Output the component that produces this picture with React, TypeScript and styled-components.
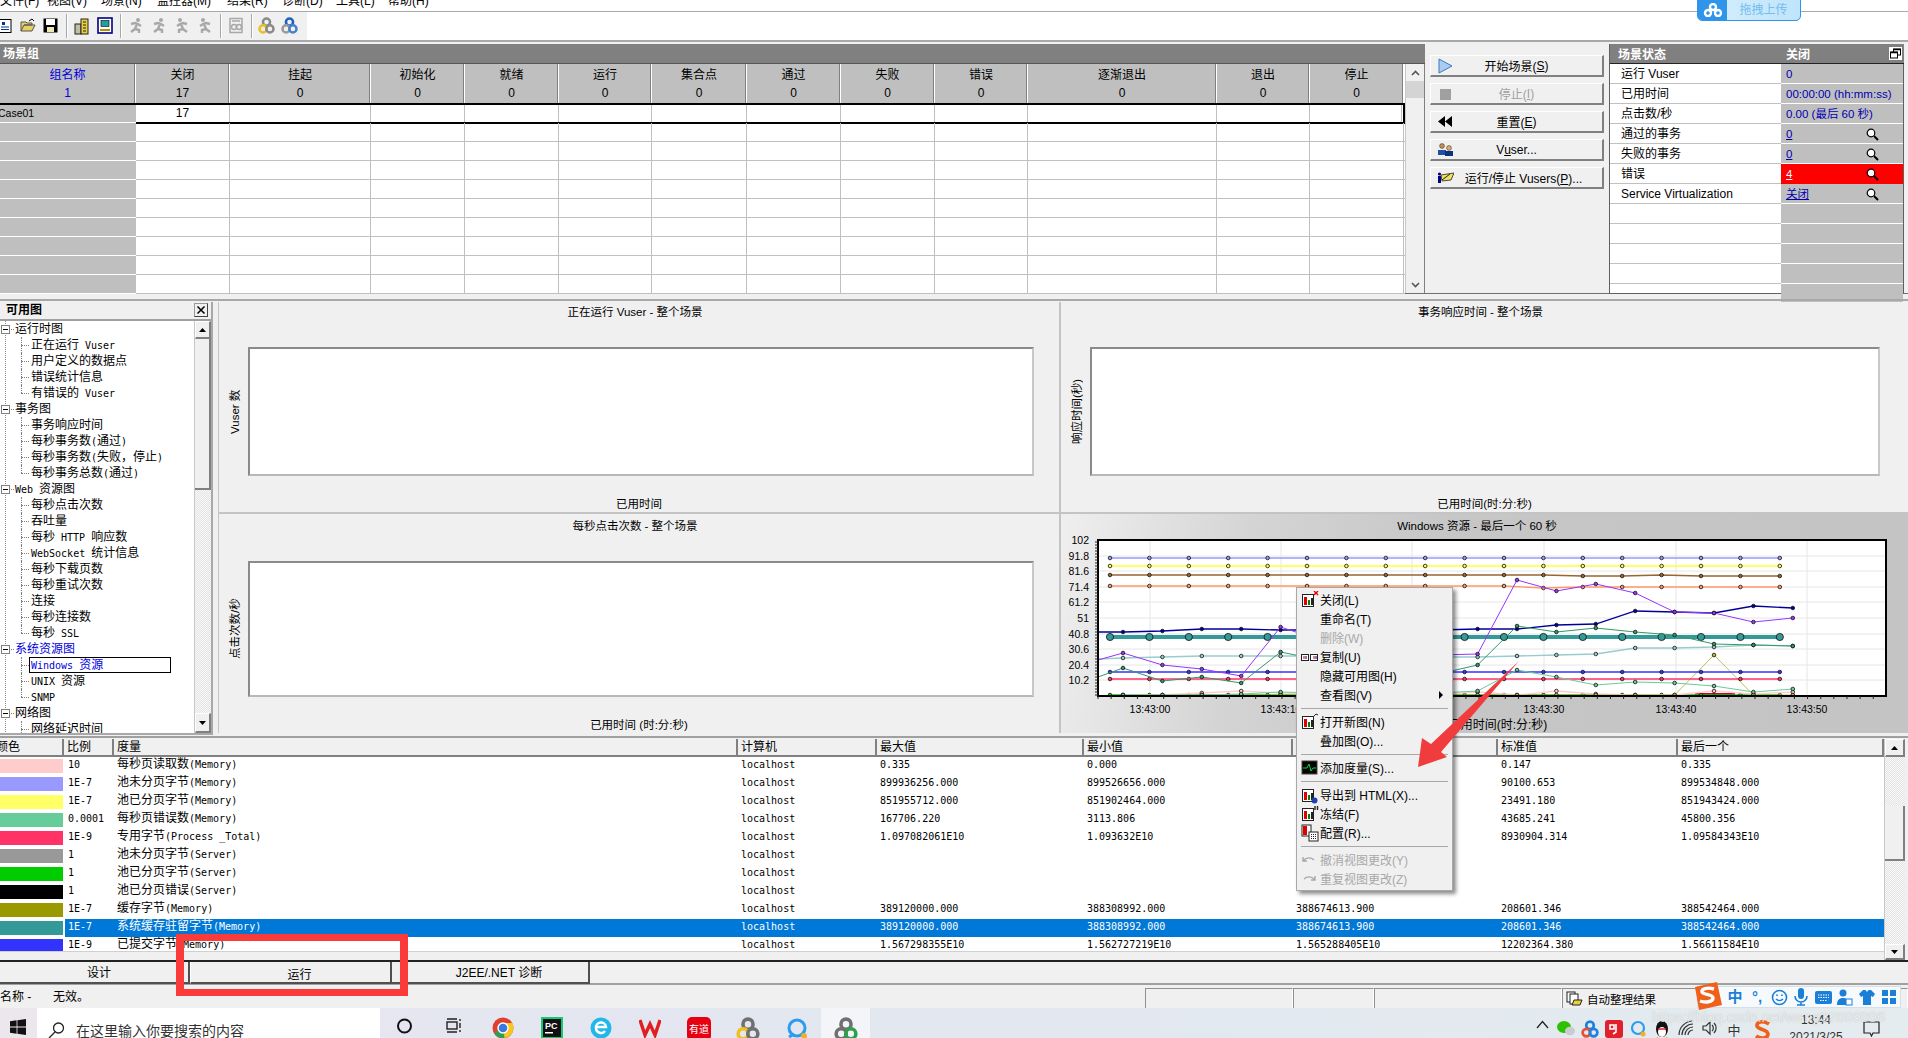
import React from "react";
import styled, { createGlobalStyle } from "styled-components";

const Global = createGlobalStyle`
  html, body { margin: 0; padding: 0; background: #f0f0f0; }
  * { box-sizing: border-box; }
  body { font-family: "Liberation Sans", "Noto Sans CJK SC", sans-serif; font-size: 12px; color: #000; }
`;

const Page = styled.div`
  position: relative; width: 1908px; height: 1038px; overflow: hidden; background: #f0f0f0;
  display: flex; flex-direction: column;
`;
const MenuBar = styled.div`
  height: 12px; background: #fff; border-bottom: 1px solid #a8a8a8; display: flex; overflow: hidden; flex: none;
`;
const MenuLabel = styled.span<{ $w: number }>`
  width: ${p => p.$w}px; flex: none; font-size: 12px; line-height: 12px; margin-top: -5px; white-space: nowrap;
`;
const ToolRow = styled.div`
  height: 30px; background: #fff; border-bottom: 2px solid #a8a8a8; flex: none; display: flex;
`;
const Toolbar = styled.div`
  width: 307px; background: #f0f0f0; display: flex; align-items: center; margin-left: 0; overflow: hidden; padding-bottom: 1px;
`;
const ToolCell = styled.div<{ $first?: boolean }>`
  width: 23px; flex: none; display: flex; justify-content: center; align-items: center;
  margin-left: ${p => (p.$first ? -7 : 0)}px;
`;
const ToolSep = styled.div`
  width: 8px; height: 24px; flex: none; position: relative;
  &::after { content: ""; display: block; width: 1px; height: 24px; margin-left: 4px; background: #a8a8a8; box-shadow: 1px 0 #fff; }
`;

const ScenarioRow = styled.div`
  height: 250px; margin-top: 2px; flex: none; display: flex; border-bottom: 1px solid #707070;
`;
const GroupWrap = styled.div`
  width: 1425px; flex: none; display: flex; flex-direction: column; position: relative;
`;
const SectionBar = styled.div`
  height: 20px; background: #808080; color: #fff; font-weight: 700; font-size: 12px; line-height: 21px; padding-left: 3px; flex: none; border-bottom: 1px solid #555;
`;
const GroupBody = styled.div`display: flex; flex: 1; min-height: 0;`;
const GroupGrid = styled.div`width: 1405px; flex: none; display: flex; flex-direction: column; background: #fff;`;
const GroupHead = styled.div`display: flex; height: 39px; flex: none;`;
const HeadCell = styled.div<{ $w: number; $blue?: boolean }>`
  width: ${p => p.$w}px; flex: none; background: #bfbfbf; border-right: 1px solid #fff; box-shadow: inset -1px 0 #808080;
  color: ${p => (p.$blue ? "#0000e0" : "#000")}; display: flex; flex-direction: column; align-items: center; line-height: 18px; padding-top: 2px; font-size: 12px;
`;
const GroupLine = styled.div<{ $first?: boolean }>`
  display: flex; height: 19px; flex: none;
  ${p => p.$first
    ? "border-top: 2px solid #000; border-bottom: 2px solid #000; height: 21px; margin-bottom: -1px; border-right: 2px solid #000;"
    : "border-bottom: 1px solid #c0c0c0;"}
`;
const NameCell = styled.div`
  width: 136px; flex: none; background: #bfbfbf; border-bottom: 1px solid #fff; margin-bottom: -1px; overflow: hidden; font-size: 10.5px; line-height: 17px; white-space: nowrap;
`;
const CaseName = styled.span`margin-left: -2px; display: inline-block;`;
const DataCell = styled.div<{ $w: number }>`
  width: ${p => p.$w}px; flex: none; border-right: 1px solid #c0c0c0; text-align: center; line-height: 17px; font-size: 12px; padding-right: 0;
`;
const VScroll = styled.div<{ $w: number }>`
  width: ${p => p.$w}px; flex: none; display: flex; flex-direction: column; border-left: 1px solid #c8c8c8;
  background: repeating-conic-gradient(#e4e4e4 0 25%, #f8f8f8 0 50%) 0 0 / 2px 2px;
`;
const PlainScroll = styled(VScroll)`background: #f0f0f0; border-right: 1px solid #808080;`;
const ScrollBtn = styled.div<{ $h: number }>`
  height: ${p => p.$h}px; flex: none; background: #f0f0f0; display: flex; align-items: center; justify-content: center;
`;
const RaisedBtn = styled(ScrollBtn)`
  border-right: 2px solid #808080; border-bottom: 2px solid #808080; border-top: 1px solid #fff; border-left: 1px solid #fff;
`;
const Thumb = styled.div<{ $h: number; $raised?: boolean }>`
  height: ${p => p.$h}px; flex: none; background: ${p => (p.$raised ? "#f0f0f0" : "#d4d4d4")};
  ${p => p.$raised && "border-right: 2px solid #808080; border-bottom: 2px solid #808080;"}
`;
const Grow = styled.div`flex: 1;`;

const BtnColumn = styled.div`
  width: 184px; flex: none; padding: 11px 0 0 5px; display: flex; flex-direction: column; gap: 6px;
`;
const CmdBtn = styled.div<{ $off?: boolean }>`
  width: 174px; height: 22px; position: relative; display: flex; align-items: center; justify-content: center;
  border-top: 1px solid #fff; border-left: 1px solid #fff; border-right: 2px solid #808080; border-bottom: 2px solid #808080;
  background: #f0f0f0; font-size: 12px; color: ${p => (p.$off ? "#a0a0a0" : "#000")};
`;
const BtnIcon = styled.span`
  position: absolute; left: 6px; top: 2px; display: flex;
`;

const StatePanel = styled.div`
  width: 295px; flex: none; display: flex; flex-direction: column; border: 1px solid #606060; border-top: none; background: #fff; align-self: stretch; height: 250px;
`;
const StateHead = styled.div`
  height: 20px; background: #808080; color: #fff; font-weight: 700; display: flex; align-items: center; border-bottom: 1px solid #222; flex: none; position: relative; margin-right: -1px;
`;
const StateHeadA = styled.span`width: 176px; padding-left: 8px;`;
const RestoreBox = styled.span`
  position: absolute; right: 2px; top: 3px; width: 13px; height: 13px; background: #fff; display: flex; align-items: center; justify-content: center;
`;
const StateRow = styled.div`
  height: 20px; display: flex; flex: none; overflow: hidden;
`;
const StateLabel = styled.div`
  width: 171px; flex: none; padding: 2px 0 0 11px; font-size: 12px; line-height: 16px; border-bottom: 1px solid #c0c0c0; white-space: nowrap;
`;
const StateValue = styled.div<{ $red?: boolean }>`
  flex: 1; background: ${p => (p.$red ? "#ff0000" : "#bfbfbf")}; border-bottom: 1px solid ${p => (p.$red ? "#ff0000" : "#fff")}; color: ${p => (p.$red ? "#fff" : "#0000b0")};
  padding: 2px 0 0 5px; line-height: 16px; font-size: 11.5px; display: flex; justify-content: space-between; white-space: nowrap;
`;
const ValLink = styled.span`text-decoration: underline;`;
const LensSlot = styled.span`margin-right: 24px; display: flex; align-items: center;`;

const GraphsRow = styled.div`
  height: 438px; margin-top: 5px; flex: none; display: flex; border-top: 2px solid #a8a8a8; padding-top: 1px; overflow: hidden;
`;
const AvailPanel = styled.div`
  width: 213px; flex: none; height: 433px; display: flex; flex-direction: column; border-right: 2px solid #a8a8a8; border-bottom: 2px solid #a8a8a8;
`;
const AvailHead = styled.div`
  height: 17px; flex: none; font-weight: 700; font-size: 12px; padding-left: 6px; line-height: 16px; position: relative;
`;
const CloseX = styled.span`
  position: absolute; right: 3px; top: 1px; width: 14px; height: 14px; border: 1px solid #999; border-right-color: #444; border-bottom-color: #444; display: flex; align-items: center; justify-content: center;
`;
const TreeFrame = styled.div`
  flex: 1; min-height: 0; display: flex; border-top: 2px solid #a0a0a0; background: #fff;
`;
const TreeBody = styled.div`
  flex: 1; overflow: hidden; height: 412px; font-size: 12px;
  background: linear-gradient(#909090 50%, transparent 50%) 5px 0 / 1px 2px repeat-y;
`;
const TreeNode = styled.div<{ $kid?: boolean; $last?: boolean; $blue?: boolean }>`
  height: 16px; line-height: 16px; position: relative; white-space: nowrap;
  padding-left: ${p => (p.$kid ? 31 : 15)}px; color: ${p => (p.$blue ? "#0000e0" : "#000")};
  ${p => p.$kid && `
    &::after { content: ""; position: absolute; left: 21px; top: 0; height: ${p.$last ? 8 : 16}px; border-left: 1px dotted #808080; }
    &::before { content: ""; position: absolute; left: 21px; top: 8px; width: 8px; border-top: 1px dotted #808080; }
  `}
  ${p => !p.$kid && `
    &::before { content: ""; position: absolute; left: 9px; top: 8px; width: 5px; border-top: 1px dotted #808080; }
  `}
`;
const Expander = styled.span`
  position: absolute; left: 1px; top: 4px; width: 9px; height: 9px; border: 1px solid #808080; background: #fff;
  &::after { content: ""; position: absolute; left: 1px; top: 3px; width: 5px; height: 1px; background: #000; }
`;
const Picked = styled.span`
  display: inline-block; margin-left: -2px; width: 142px; height: 16px; border: 1px solid #000; line-height: 14px; padding-left: 1px; color: #0000e0;
`;
const GraphGrid = styled.div`
  margin-left: 5px; flex: 1; display: grid; grid-template-columns: 840px 847px; grid-template-rows: 210px 219px; gap: 2px; height: 431px; background: #c4c4c4; border-left: 1px solid #c4c4c4;
`;
const GraphCell = styled.div`
  background: #f0f0f0; display: flex; flex-direction: column; min-width: 0;
`;
const ChartCell = styled.div`
  background: linear-gradient(100deg, #efefef 0%, #d4d4d4 22%, #c6c6c6 45%, #c4c4c4 100%);
`;
const GraphTitle = styled.div<{ $top: number }>`
  height: ${p => p.$top}px; padding-top: ${p => p.$top - 20}px; line-height: 20px; text-align: center; font-size: 11.5px; flex: none; padding-right: 8px;
`;
const PlotRow = styled.div<{ $right: number }>`
  flex: 1; min-height: 0; display: flex; padding-right: ${p => p.$right}px; margin-top: 25px;
`;
const YTitle = styled.div`
  width: 29px; flex: none; display: flex; align-items: center; justify-content: center; font-size: 11.5px; writing-mode: vertical-rl; text-orientation: sideways; transform: rotate(180deg);
`;
const Plot = styled.div`
  flex: 1; background: #fff; border: 2px solid; border-color: #8a8a8a #c8c8c8 #b8b8b8 #8a8a8a;
`;
const XTitle = styled.div`
  height: 16px; margin: 20px 0 0; flex: none; line-height: 16px; text-align: center; font-size: 11.5px; padding-right: 0;
`;

const MeasureWrap = styled.div`
  height: 224px; flex: none; border-top: 2px solid #a0a0a0; margin-top: -1px; padding-top: 1px; display: flex;
`;
const MeasureMain = styled.div`width: 1884px; flex: none; display: flex; flex-direction: column;`;
const MeasureHead = styled.div`
  height: 18px; flex: none; display: flex; border-bottom: 2px solid #808080; margin-bottom: 0;
`;
const HeadTh = styled.div<{ $w: number }>`
  width: ${p => p.$w}px; flex: none; padding-left: 3px; border-right: 2px solid #808080; font-size: 12px; line-height: 16px; white-space: nowrap;
`;
const MeasureList = styled.div`background: #fff; height: 195px; flex: none; overflow: hidden; border-bottom: 1px solid #d0d0d0;`;
const MRow = styled.div<{ $sel?: boolean }>`
  height: 18px; display: flex; align-items: stretch; color: ${p => (p.$sel ? "#fff" : "#000")};
  font-size: 12px;
`;
const Swatch = styled.div<{ $c: string }>`
  width: 63px; height: 14px; margin: 2px 2px 2px 0; flex: none; background: ${p => p.$c};
`;
const MCell = styled.div<{ $w: number; $sel?: boolean }>`
  width: ${p => p.$w}px; flex: none; padding-left: 3px; line-height: 14px; white-space: nowrap; overflow: hidden;
  background: ${p => (p.$sel ? "#0078d7" : "transparent")};
`;
const Latin = styled.span`font-family: "DejaVu Sans Mono", "Liberation Mono", monospace; font-size: 10px;`;

const TabsBar = styled.div`
  height: 25px; flex: none; border-top: 2px solid #222; border-bottom: 2px solid #a0a0a0; display: flex; margin-top: 0;
`;
const Tab = styled.div<{ $w: number; $pad: number; $active?: boolean }>`
  width: ${p => p.$w}px; flex: none; text-align: center; font-size: 12px; line-height: ${p => (p.$active ? 26 : 23)}px; height: 22px; padding-left: ${p => p.$pad}px;
  border-right: 2px solid #505050; border-bottom: 2px solid #505050;
  ${p => p.$active && "border-left: 1px solid #fff;"}
`;
const StatusBar = styled.div`
  height: 23px; flex: none; display: flex; align-items: flex-end;
`;
const StatusText = styled.div`
  width: 1145px; flex: none; height: 23px; line-height: 24px; font-size: 12px; display: flex; overflow: hidden;
`;
const StatusName = styled.span`width: 53px; flex: none;`;
const StatusPane = styled.div<{ $w: number }>`
  width: ${p => p.$w}px; height: 20px; flex: none; border-left: 1px solid #909090; border-top: 1px solid #909090; border-right: 1px solid #fff; display: flex; align-items: center; gap: 4px; padding-left: 3px; font-size: 11.5px;
`;

const Taskbar = styled.div`
  height: 30px; flex: none; display: flex; align-items: flex-start; background: linear-gradient(90deg, #ebe7ec 0, #e4e6f0 25%, #e2e7f0 50%, #e4ecef 100%);
`;
const StartCell = styled.div`width: 37px; height: 30px; flex: none; display: flex; align-items: center; justify-content: center; padding: 8px 2px 0 0;`;
const SearchBox = styled.div`
  width: 343px; height: 30px; flex: none; background: #fff; display: flex; align-items: center; gap: 11px; padding: 14px 0 0 11px; font-size: 14px; color: #333; white-space: nowrap;
`;
const TaskCell = styled.div<{ $on?: boolean }>`
  width: 49px; height: 30px; flex: none; display: flex; justify-content: center; padding-top: 9px; background: ${p => (p.$on ? "#f3f5f8" : "transparent")};
`;
const Tray = styled.div`
  margin-left: auto; display: flex; align-items: flex-start; height: 30px; padding-right: 20px;
`;
const TrayCell = styled.div`width: 24px; height: 30px; flex: none; display: flex; justify-content: center; padding-top: 12px; font-size: 13px; color: #333;`;
const TrayLogo = styled(TrayCell)`width: 32px;`;
const Clock = styled.div`
  width: 76px; flex: none; text-align: center; color: #333; font-size: 12px; line-height: 17px; padding-top: 4px; white-space: nowrap;
`;
const NotifyCell = styled.div`width: 34px; flex: none; display: flex; justify-content: center; padding-top: 13px;`;

const ContextMenu = styled.div`
  position: absolute; left: 1296px; top: 587px; width: 157px; height: 304px; background: #f0f0f0; border: 1px solid #a8a8a8; padding: 2px 0 0; box-shadow: 3px 3px 4px rgba(0,0,0,.45); z-index: 3;
`;
const MenuRow = styled.div<{ $off?: boolean }>`
  height: 19px; display: flex; align-items: center; position: relative; padding-left: 23px; font-size: 12px; color: ${p => (p.$off ? "#a8a8a8" : "#000")}; white-space: nowrap;
`;
const MenuIcon = styled.span`position: absolute; left: 4px; top: 1px; display: flex;`;
const MenuCaret = styled.span`position: absolute; right: 9px; top: 6px; width: 0; height: 0; border-left: 4px solid #000; border-top: 4px solid transparent; border-bottom: 4px solid transparent;`;
const MenuSep = styled.div`height: 8px; display: flex; align-items: center; padding: 0 4px; &::after { content: ""; flex: 1; height: 1px; background: #a8a8a8; }`;

const RedFrame = styled.div`
  position: absolute; left: 176px; top: 934px; width: 232px; height: 62px; border: 7px solid #fb3a3a; border-width: 7px 8px; z-index: 4;
`;
const ArrowLayer = styled.svg`position: absolute; left: 0; top: 0; z-index: 5; pointer-events: none;`;
const UploadTab = styled.div`
  position: absolute; left: 1697px; top: -1px; width: 104px; height: 22px; border: 1px solid #2f95ea; border-radius: 0 0 5px 5px; display: flex; overflow: hidden; z-index: 4; background: linear-gradient(90deg, #d7effc, #bfe4fa);
`;
const UploadIcon = styled.div`width: 29px; background: #2f95ea; display: flex; align-items: center; justify-content: center;`;
const UploadText = styled.div`flex: 1; text-align: center; color: #72bdef; font-size: 12px; line-height: 21px;`;
const Watermark = styled.div`
  position: absolute; left: 1652px; top: 1009px; font-size: 14.5px; color: rgba(255,255,255,.72); text-shadow: 0 0 1px rgba(120,120,120,.5); z-index: 6; white-space: nowrap;
`;
const SogouBar = styled.div`
  position: absolute; left: 1697px; top: 986px; width: 204px; height: 22px; background: #f6fafd; border: 1px solid #d4dfe8; display: flex; align-items: center; padding-left: 26px; z-index: 6;
`;
const SogouCell = styled.span`width: 22px; flex: none; display: flex; justify-content: center; color: #1b7fd8; font-size: 15px; font-weight: 700; line-height: 20px;`;
const SogouLogo = styled.svg`position: absolute; left: 1693px; top: 982px; z-index: 7;`;

const sim = (t: string) =>
  t.split(/([\x00-\x7f]+)/).filter(Boolean).map((s, i) =>
    /^[\x00-\x7f]+$/.test(s) ? <Latin key={i}>{s}</Latin> : <React.Fragment key={i}>{s}</React.Fragment>
  );

const Rings = ({ a = "#e8c020", b = "#8a8a8a", c = "#8a8a8a", s = 17 }: { a?: string; b?: string; c?: string; s?: number }) => (
  <svg width={s} height={s} viewBox="0 0 20 20" fill="none" strokeWidth="3">
    <circle cx="10" cy="6" r="4.2" stroke={c} />
    <circle cx="6" cy="14" r="4.2" stroke={a} />
    <circle cx="14" cy="14" r="4.2" stroke={b} />
  </svg>
);
const Runner = ({ flip }: { flip?: boolean }) => (
  <svg width="16" height="17" viewBox="0 0 16 17" fill="none" stroke="#a8a8a8" strokeWidth="2.4" style={flip ? { transform: "scaleX(-1)" } : undefined}>
    <circle cx="10" cy="3" r="2" fill="#a8a8a8" stroke="none" />
    <path d="M3 7l4-1 3 1 3 2M9 7l-2 5-4 3M7 12l4 1 0 3" />
  </svg>
);
const ChartIcon = ({ mark }: { mark?: React.ReactNode }) => (
  <svg width="18" height="18" viewBox="0 0 18 18">
    <rect x="1.5" y="3.5" width="11" height="12" fill="#fff" stroke="#222" />
    <rect x="3" y="6" width="3" height="8" fill="#e00000" />
    <rect x="7" y="9" width="2" height="5" fill="#008000" />
    <rect x="10" y="7" width="2" height="7" fill="#222" />
    {mark}
  </svg>
);
const Lens = () => (
  <svg width="13" height="13" viewBox="0 0 13 13" fill="none">
    <circle cx="5" cy="5" r="3.8" fill="#fff" stroke="#000" strokeWidth="1.2" />
    <path d="M8 8l4 4" stroke="#000" strokeWidth="2" />
  </svg>
);
const Arrow = ({ up }: { up?: boolean }) => (
  <svg width="9" height="6" viewBox="0 0 9 6"><path d={up ? "M4.5 1L8 5H1z" : "M4.5 5L8 1H1z"} fill="#000" /></svg>
);
const Chevron = ({ up }: { up?: boolean }) => (
  <svg width="9" height="6" viewBox="0 0 9 6" fill="none" stroke="#555" strokeWidth="1.6"><path d={up ? "M1 5l3.5-3.5L8 5" : "M1 1l3.5 3.5L8 1"} /></svg>
);

const COLS = [136, 94, 141, 94, 94, 93, 95, 94, 94, 93, 189, 93, 94];
const HEADS = ["组名称", "关闭", "挂起", "初始化", "就绪", "运行", "集合点", "通过", "失败", "错误", "逐渐退出", "退出", "停止"];
const VALS = ["1", "17", "0", "0", "0", "0", "0", "0", "0", "0", "0", "0", "0"];
const MENUS: [string, number][] = [["文件(F)", 47], ["视图(V)", 54], ["场景(N)", 56], ["监控器(M)", 70], ["结果(R)", 55], ["诊断(D)", 54], ["工具(L)", 52], ["帮助(H)", 50]];

const STATE: { l: string; v: React.ReactNode; lens?: boolean; red?: boolean }[] = [
  { l: "运行 Vuser", v: "0" },
  { l: "已用时间", v: "00:00:00 (hh:mm:ss)" },
  { l: "点击数/秒", v: "0.00 (最后 60 秒)" },
  { l: "通过的事务", v: <ValLink>0</ValLink>, lens: true },
  { l: "失败的事务", v: <ValLink>0</ValLink>, lens: true },
  { l: "错误", v: <ValLink>4</ValLink>, lens: true, red: true },
  { l: "Service Virtualization", v: <ValLink>关闭</ValLink>, lens: true },
  { l: "", v: "" }, { l: "", v: "" }, { l: "", v: "" }, { l: "", v: "" }, { l: "", v: "" },
];

type T = { t: string; kid?: boolean; last?: boolean; blue?: boolean; pick?: boolean };
const TREE: T[] = [
  { t: "运行时图" }, { t: "正在运行 Vuser", kid: true }, { t: "用户定义的数据点", kid: true }, { t: "错误统计信息", kid: true }, { t: "有错误的 Vuser", kid: true, last: true },
  { t: "事务图" }, { t: "事务响应时间", kid: true }, { t: "每秒事务数(通过)", kid: true }, { t: "每秒事务数(失败，停止)", kid: true }, { t: "每秒事务总数(通过)", kid: true, last: true },
  { t: "Web 资源图" }, { t: "每秒点击次数", kid: true }, { t: "吞吐量", kid: true }, { t: "每秒 HTTP 响应数", kid: true }, { t: "WebSocket 统计信息", kid: true }, { t: "每秒下载页数", kid: true }, { t: "每秒重试次数", kid: true }, { t: "连接", kid: true }, { t: "每秒连接数", kid: true }, { t: "每秒 SSL", kid: true, last: true },
  { t: "系统资源图", blue: true }, { t: "Windows 资源", kid: true, pick: true }, { t: "UNIX 资源", kid: true }, { t: "SNMP", kid: true, last: true },
  { t: "网络图" }, { t: "网络延迟时间", kid: true },
];

const MW = [114 - 64, 738 - 114, 877 - 738, 1084 - 877, 1293 - 1084, 1498 - 1293, 1678 - 1498, 1884 - 1678];
const MROWS: { c: string; r: string[] }[] = [
  { c: "#ffcccc", r: ["10", "每秒页读取数(Memory)", "localhost", "0.335", "0.000", "0.060", "0.147", "0.335"] },
  { c: "#9999ff", r: ["1E-7", "池未分页字节(Memory)", "localhost", "899936256.000", "899526656.000", "899702391.000", "90100.653", "899534848.000"] },
  { c: "#ffff66", r: ["1E-7", "池已分页字节(Memory)", "localhost", "851955712.000", "851902464.000", "851932000.000", "23491.180", "851943424.000"] },
  { c: "#66cc99", r: ["0.0001", "每秒页错误数(Memory)", "localhost", "167706.220", "3113.806", "36000.120", "43685.241", "45800.356"] },
  { c: "#ff3366", r: ["1E-9", "专用字节(Process _Total)", "localhost", "1.097082061E10", "1.093632E10", "1.09512E10", "8930904.314", "1.09584343E10"] },
  { c: "#999999", r: ["1", "池未分页字节(Server)", "localhost", "", "", "", "", ""] },
  { c: "#00cc00", r: ["1", "池已分页字节(Server)", "localhost", "", "", "", "", ""] },
  { c: "#000000", r: ["1", "池已分页错误(Server)", "localhost", "", "", "", "", ""] },
  { c: "#999900", r: ["1E-7", "缓存字节(Memory)", "localhost", "389120000.000", "388308992.000", "388674613.900", "208601.346", "388542464.000"] },
  { c: "#339999", r: ["1E-7", "系统缓存驻留字节(Memory)", "localhost", "389120000.000", "388308992.000", "388674613.900", "208601.346", "388542464.000"] },
  { c: "#3333ff", r: ["1E-9", "已提交字节(Memory)", "localhost", "1.567298355E10", "1.562727219E10", "1.565288405E10", "12202364.380", "1.56611584E10"] },
];
const MHEAD = ["比例", "度量", "计算机", "最大值", "最小值", "平均值", "标准值", "最后一个"];

const XA = Array.from({ length: 18 }, (_, i) => 1110 + 39.4 * i);
const XB = Array.from({ length: 18 }, (_, i) => 1123 + 39.4 * i);
const flat = (y: number) => XA.map(() => y);
const YT: [string, number][] = [["102", 540], ["91.8", 556], ["81.6", 571], ["71.4", 587], ["61.2", 602], ["51", 618], ["40.8", 634], ["30.6", 649], ["20.4", 665], ["10.2", 680]];
const XT: [string, number][] = [["13:43:00", 1150], ["13:43:10", 1281], ["13:43:20", 1412], ["13:43:30", 1544], ["13:43:40", 1676], ["13:43:50", 1807]];

type S = { c: string; xs: number[]; ys: number[]; start?: number; w?: number; r?: number };
const SERIES: S[] = [
  { c: "#000000", xs: XB, ys: XB.map(() => 696) },
  { c: "#00cc00", xs: XA, ys: flat(695) },
  { c: "#ffcccc", xs: XB, ys: [695, 695, 693, 691, 693, 694, 695, 695, 694, 692, 695, 691, 694, 695, 695, 691, 694, 692] },
  { c: "#b8b840", xs: XB, ys: [695, 695, 695, 695, 695, 695, 695, 695, 695, 695, 695, 695, 695, 695, 695, 655, 695, 695], w: 0.9 },
  { c: "#9999ff", xs: XA, ys: flat(558) },
  { c: "#ffff33", xs: XA, ys: flat(566) },
  { c: "#996633", xs: XA, ys: [...Array(12).fill(575), 576, 576, 575, 576, 576, 576] },
  { c: "#ff9966", xs: XA, ys: [...Array(11).fill(586), 588, 587, 587, 587, 587, 587, 587] },
  { c: "#99cccc", xs: XB, ys: [658, 657, 656, 656, 656, 656, 657, 657, 657, 657, 656, 655, 654, 648, 648, 647, 645, 646], start: 659 },
  { c: "#339999", xs: XA, ys: flat(637), w: 4, r: 3.6 },
  { c: "#000099", xs: XB, ys: [632, 631, 629, 629, 630, 630, 630, 630, 630, 629, 629, 625, 624, 611, 612, 613, 606, 608], start: 632 },
  { c: "#3333ff", xs: XA, ys: flat(672) },
  { c: "#ff3366", xs: XA, ys: flat(679) },
  { c: "#66cc99", xs: XB, ys: [695, 695, 695, 694, 692, 693, 694, 695, 693, 691, 670, 677, 685, 682, 683, 686, 692, 689], w: 1 },
  { c: "#339966", xs: XB, ys: [668, 681, 677, 683, 652, 660, 672, 676, 674, 665, 626, 632, 628, 632, 635, 644, 645, 646], start: 677, w: 1 },
  { c: "#9933ff", xs: XB, ys: [653, 665, 669, 676, 627, 640, 650, 655, 655, 654, 580, 591, 584, 593, 612, 613, 622, 618], start: 660, w: 1 },
];

const ChartSvg = () => (
  <svg width="847" height="219" viewBox="1061 514 847 219" style={{ display: "block" }}>
    <text x="1477" y="530" fontSize="11.5" textAnchor="middle" fontFamily="'Liberation Sans','Noto Sans CJK SC',sans-serif">Windows 资源 - 最后一个 60 秒</text>
    <rect x="1098" y="540" width="788" height="156" fill="#fff" />
    {YT.slice(1).map(([, y]) => <line key={y} x1="1099" x2="1885" y1={y} y2={y} stroke="#e6e6e6" />)}
    {XT.map(([, x]) => <line key={x} x1={x} x2={x} y1="541" y2="695" stroke="#e6e6e6" />)}
    <clipPath id="plotClip"><rect x="1098" y="540" width="788" height="156" /></clipPath>
    <g clipPath="url(#plotClip)">
      <rect x="1695" y="693" width="40" height="3" fill="#cc0033" />
      {SERIES.map((s, i) => {
        const pts = s.xs.map((x, k) => `${x},${s.ys[k]}`);
        if (s.start !== undefined) pts.unshift(`1098,${s.start}`);
        return (
          <g key={i}>
            <polyline points={pts.join(" ")} fill="none" stroke={s.c} strokeWidth={s.w ?? 1.3} />
            {s.xs.map((x, k) => <circle key={k} cx={x} cy={s.ys[k]} r={s.r ?? 1.8} fill={s.c} stroke="#111" strokeWidth="0.8" />)}
          </g>
        );
      })}
    </g>
    <rect x="1098" y="540" width="788" height="156" fill="none" stroke="#000" strokeWidth="2" />
    {Array.from({ length: 52 }, (_, i) => <line key={i} x1="1095" x2="1098" y1={542 + i * 3} y2={542 + i * 3} stroke="#222" strokeWidth="1" />)}
    {Array.from({ length: 60 }, (_, i) => <line key={i} x1={1098 + i * 13.14} x2={1098 + i * 13.14} y1="696" y2="699" stroke="#222" strokeWidth="1" />)}
    {YT.map(([t, y]) => <text key={t} x="1089" y={y + 4} fontSize="10.5" textAnchor="end" fontFamily="'Liberation Sans',sans-serif">{t}</text>)}
    {XT.map(([t, x]) => <text key={t} x={x} y="713" fontSize="10.5" textAnchor="middle" fontFamily="'Liberation Sans',sans-serif">{t}</text>)}
    <text x="1498" y="729" fontSize="12" textAnchor="middle" fontFamily="'Liberation Sans','Noto Sans CJK SC',sans-serif">已用时间(时:分:秒)</text>
  </svg>
);

const EmptyGraph = ({ title, y, x, right, top }: { title: string; y: string; x: string; right: number; top: number }) => (
  <GraphCell>
    <GraphTitle $top={top}>{title}</GraphTitle>
    <PlotRow $right={right}><YTitle>{y}</YTitle><Plot /></PlotRow>
    <XTitle>{x}</XTitle>
  </GraphCell>
);

export default function App() {
  return (
    <Page>
      <Global />
      <MenuBar>{MENUS.map(([m, w]) => <MenuLabel key={m} $w={w}>{m}</MenuLabel>)}</MenuBar>
      <ToolRow>
        <Toolbar>
          <ToolCell $first><svg width="16" height="16" viewBox="0 0 16 16"><rect x="2" y="1.5" width="12" height="13" fill="#fff" stroke="#000" /><rect x="5" y="4" width="3" height="3" fill="#003399" /><path d="M4 9h8M4 11.5h8" stroke="#003399" /></svg></ToolCell>
          <ToolCell><svg width="16" height="15" viewBox="0 0 16 15"><path d="M1 13V4h5l1 1h5v2H4l-3 6h11l3-6H4" fill="#e8d060" stroke="#555" /><path d="M9 3l3-2 2 2" fill="none" stroke="#000" /></svg></ToolCell>
          <ToolCell><svg width="15" height="15" viewBox="0 0 15 15"><rect x="0.5" y="0.5" width="14" height="14" fill="#000" /><rect x="3" y="1" width="9" height="6" fill="#fff" /><rect x="4" y="9" width="7" height="5" fill="#e8e8b0" /></svg></ToolCell>
          <ToolSep />
          <ToolCell><svg width="16" height="18" viewBox="0 0 16 18"><rect x="1" y="7" width="6" height="10" fill="#c0c0a0" stroke="#222" /><rect x="7" y="2" width="7" height="15" fill="#e8d040" stroke="#222" /><path d="M9 5h3M9 8h3M9 11h3M9 14h3" stroke="#222" /></svg></ToolCell>
          <ToolCell><svg width="16" height="17" viewBox="0 0 16 17"><rect x="1" y="1" width="14" height="15" fill="#fff" stroke="#000080" strokeWidth="1.6" /><rect x="4" y="3.5" width="8" height="6" fill="#20a0a0" stroke="#000" strokeWidth=".6" /><path d="M3 13h10" stroke="#b09000" strokeWidth="2" /></svg></ToolCell>
          <ToolSep />
          <ToolCell><Runner /></ToolCell>
          <ToolCell><Runner /></ToolCell>
          <ToolCell><Runner flip /></ToolCell>
          <ToolCell><Runner flip /></ToolCell>
          <ToolSep />
          <ToolCell><svg width="16" height="17" viewBox="0 0 16 17" fill="none" stroke="#a8a8a8" strokeWidth="1.5"><rect x="2" y="1.5" width="12" height="14" /><circle cx="6" cy="10" r="2.5" /><circle cx="11" cy="10" r="2.5" /><path d="M4 4h8" /></svg></ToolCell>
          <ToolSep />
          <ToolCell><Rings /></ToolCell>
          <ToolCell><Rings a="#9a9a9a" b="#4a80c8" c="#2060c0" /></ToolCell>
        </Toolbar>
      </ToolRow>

      <ScenarioRow>
        <GroupWrap>
          <SectionBar>场景组</SectionBar>
          <GroupBody>
            <GroupGrid>
              <GroupHead>
                {HEADS.map((h, i) => (
                  <HeadCell key={h} $w={COLS[i]} $blue={i === 0}><span>{h}</span><span>{VALS[i]}</span></HeadCell>
                ))}
                <HeadCell $w={1} />
              </GroupHead>
              <GroupLine $first>
                <NameCell><CaseName>Case01</CaseName></NameCell>
                {COLS.slice(1).map((w, i) => <DataCell key={i} $w={w - (i === 11 ? 2 : 0)}>{i === 0 ? "17" : ""}</DataCell>)}
              </GroupLine>
              {Array.from({ length: 9 }, (_, r) => (
                <GroupLine key={r}>
                  <NameCell />
                  {COLS.slice(1).map((w, i) => <DataCell key={i} $w={w} />)}
                </GroupLine>
              ))}
            </GroupGrid>
            <PlainScroll $w={20}>
              <ScrollBtn $h={17}><Chevron up /></ScrollBtn>
              <Thumb $h={17} />
              <Grow />
              <ScrollBtn $h={17}><Chevron /></ScrollBtn>
            </PlainScroll>
          </GroupBody>
        </GroupWrap>
        <BtnColumn>
          <CmdBtn>
            <BtnIcon><svg width="17" height="16" viewBox="0 0 17 16"><path d="M2 1l13 7-13 7z" fill="#a8cdf0" stroke="#3a78c0" /></svg></BtnIcon>
            开始场景(<u>S</u>)
          </CmdBtn>
          <CmdBtn $off>
            <BtnIcon><svg width="17" height="16" viewBox="0 0 17 16"><rect x="3" y="3" width="11" height="11" fill="#a0a0a0" /></svg></BtnIcon>
            停止(<u>I</u>)
          </CmdBtn>
          <CmdBtn>
            <BtnIcon><svg width="17" height="16" viewBox="0 0 17 16"><path d="M8 2v11L1 7.5zM15 2v11L8 7.5z" fill="#000" /></svg></BtnIcon>
            重置(<u>E</u>)
          </CmdBtn>
          <CmdBtn>
            <BtnIcon><svg width="17" height="16" viewBox="0 0 17 16"><circle cx="5" cy="4" r="2.4" fill="#c89050" stroke="#222" strokeWidth=".5" /><circle cx="12" cy="6" r="2.4" fill="#e0b060" stroke="#222" strokeWidth=".5" /><path d="M1 13V8h8v5z" fill="#2050a0" /><path d="M8 14V9h8v5z" fill="#103080" /></svg></BtnIcon>
            V<u>u</u>ser...
          </CmdBtn>
          <CmdBtn>
            <BtnIcon><svg width="17" height="16" viewBox="0 0 17 16"><circle cx="2.5" cy="4" r="1.6" fill="#000080" /><path d="M1 6h3v7H1z" fill="#000080" /><path d="M4 5l13-2-3 7-9 1z" fill="#f0e060" stroke="#222" strokeWidth=".8" /><path d="M5 10l8-6" stroke="#222" /></svg></BtnIcon>
            <span style={{ paddingLeft: 14 }}>运行/停止 Vusers(<u>P</u>)...</span>
          </CmdBtn>
        </BtnColumn>
        <StatePanel>
          <StateHead>
            <StateHeadA>场景状态</StateHeadA>
            <span>关闭</span>
            <RestoreBox><svg width="11" height="11" viewBox="0 0 11 11" fill="none" stroke="#000"><rect x="3.5" y="1" width="7" height="6" /><rect x="0.5" y="4" width="7" height="6" fill="#fff" /><path d="M3.5 1.5h7M.5 4.5h7" strokeWidth="1.6" /></svg></RestoreBox>
          </StateHead>
          {STATE.map((s, i) => (
            <StateRow key={i}>
              <StateLabel>{s.l}</StateLabel>
              <StateValue $red={s.red}>
                <span>{s.v}</span>
                {s.lens && <LensSlot><Lens /></LensSlot>}
              </StateValue>
            </StateRow>
          ))}
        </StatePanel>
      </ScenarioRow>

      <GraphsRow>
        <AvailPanel>
          <AvailHead>
            可用图
            <CloseX><svg width="10" height="10" viewBox="0 0 10 10" stroke="#000" strokeWidth="1.5"><path d="M1.5 1.5l7 7M8.5 1.5l-7 7" /></svg></CloseX>
          </AvailHead>
          <TreeFrame>
            <TreeBody>
              {TREE.map((n, i) => (
                <TreeNode key={i} $kid={n.kid} $last={n.last} $blue={n.blue}>
                  {!n.kid && <Expander />}
                  {n.pick ? <Picked>{sim(n.t)}</Picked> : sim(n.t)}
                </TreeNode>
              ))}
            </TreeBody>
            <VScroll $w={17}>
              <RaisedBtn $h={18}><Arrow up /></RaisedBtn>
              <Thumb $h={151} $raised />
              <Grow />
              <RaisedBtn $h={20}><Arrow /></RaisedBtn>
            </VScroll>
          </TreeFrame>
        </AvailPanel>
        <GraphGrid>
          <EmptyGraph title="正在运行 Vuser - 整个场景" y="Vuser 数" x="已用时间" right={25} top={20} />
          <EmptyGraph title="事务响应时间 - 整个场景" y="响应时间(秒)" x="已用时间(时:分:秒)" right={28} top={20} />
          <EmptyGraph title="每秒点击次数 - 整个场景" y="点击次数/秒" x="已用时间 (时:分:秒)" right={25} top={22} />
          <ChartCell><ChartSvg /></ChartCell>
        </GraphGrid>
      </GraphsRow>

      <MeasureWrap>
        <MeasureMain>
          <MeasureHead>
            <HeadTh $w={64} style={{ paddingLeft: 0 }}><span style={{ marginLeft: -4 }}>颜色</span></HeadTh>
            {MHEAD.map((h, i) => <HeadTh key={h} $w={MW[i]}>{h}</HeadTh>)}
          </MeasureHead>
          <MeasureList>
            {MROWS.map((r, i) => (
              <MRow key={i} $sel={i === 9}>
                <Swatch $c={r.c} />
                {r.r.map((v, k) => (
                  <MCell key={k} $w={k === 0 ? MW[0] - 1 : MW[k]} $sel={i === 9}>{sim(v)}</MCell>
                ))}
              </MRow>
            ))}
          </MeasureList>
        </MeasureMain>
        <VScroll $w={21}>
          <RaisedBtn $h={18}><Arrow up /></RaisedBtn>
          <Grow style={{ maxHeight: 49 }} />
          <Thumb $h={55} $raised />
          <Grow />
          <RaisedBtn $h={16}><Arrow /></RaisedBtn>
        </VScroll>
      </MeasureWrap>

      <TabsBar>
        <Tab $w={190} $pad={10}>设计</Tab>
        <Tab $w={202} $pad={18} $active>运行</Tab>
        <Tab $w={198} $pad={18}>J2EE/.NET 诊断</Tab>
      </TabsBar>
      <StatusBar>
        <StatusText>
          <StatusName>名称 -</StatusName>
          <span>无效。</span>
        </StatusText>
        <StatusPane $w={148} />
        <StatusPane $w={81} />
        <StatusPane $w={188} />
        <StatusPane $w={346}>
          <svg width="17" height="16" viewBox="0 0 17 16"><rect x="1" y="1" width="8" height="10" fill="#fff" stroke="#222" /><rect x="4" y="3" width="8" height="10" fill="#fff" stroke="#222" /><path d="M6 14l2-5h8l-2 5z" fill="#e8d040" stroke="#222" /></svg>
          自动整理结果
        </StatusPane>
      </StatusBar>
      <Taskbar>
        <StartCell><svg width="16" height="16" viewBox="0 0 16 16" fill="#111"><path d="M0 2.2L6.6 1.3V7.5H0zM7.4 1.2L16 0V7.5H7.4zM0 8.4H6.6V14.7L0 13.8zM7.4 8.4H16V16L7.4 14.8z" /></svg></StartCell>
        <SearchBox>
          <svg width="17" height="17" viewBox="0 0 17 17" fill="none" stroke="#222" strokeWidth="1.3"><circle cx="10.5" cy="6" r="5" /><path d="M7 10l-6 6" /></svg>
          在这里输入你要搜索的内容
        </SearchBox>
        <TaskCell><svg width="17" height="17" viewBox="0 0 17 17" fill="none" stroke="#111" strokeWidth="2"><circle cx="8.5" cy="9" r="6.5" /></svg></TaskCell>
        <TaskCell><svg width="18" height="17" viewBox="0 0 18 17" fill="none" stroke="#222" strokeWidth="1.4"><rect x="2" y="5" width="10" height="7" /><path d="M2 2h10M2 15h10M15 2v2M15 6v5M15 13v2" /></svg></TaskCell>
        <TaskCell><svg width="22" height="22" viewBox="0 0 22 22"><circle cx="11" cy="11" r="10.5" fill="#e04030" /><path d="M11 11L2 16A10.5 10.5 0 0 0 14 21z" fill="#30a050" /><path d="M11 6h9.5a10.5 10.5 0 0 1-8 15z" fill="#f8c820" /><circle cx="11" cy="11" r="5" fill="#3878e0" stroke="#fff" strokeWidth="1.4" /></svg></TaskCell>
        <TaskCell><svg width="22" height="22" viewBox="0 0 22 22"><rect width="22" height="22" fill="#14c878" /><rect x="2" y="2" width="18" height="18" fill="#111" /><text x="4" y="12" fontSize="9" fontWeight="700" fill="#fff" fontFamily="Liberation Sans">PC</text><rect x="4" y="15" width="8" height="1.5" fill="#fff" /></svg></TaskCell>
        <TaskCell><svg width="22" height="22" viewBox="0 0 22 22"><circle cx="11" cy="11" r="10.5" fill="#20b8e8" /><path d="M6 10h10a5 5 0 0 0-10 1 5 5 0 0 0 9 3" fill="none" stroke="#fff" strokeWidth="2.4" /></svg></TaskCell>
        <TaskCell><svg width="22" height="22" viewBox="0 0 22 22" fill="none" stroke="#e02020" strokeWidth="3.4"><path d="M1 3l5 15 5-11 5 11 5-15" /></svg></TaskCell>
        <TaskCell><svg width="24" height="24" viewBox="0 0 24 24"><rect width="24" height="24" rx="5" fill="#e60012" /><text x="12" y="16" fontSize="10" fill="#fff" textAnchor="middle" fontFamily="Noto Sans CJK SC">有道</text></svg></TaskCell>
        <TaskCell><Rings a="#f0c020" b="#707070" c="#707070" s={24} /></TaskCell>
        <TaskCell><svg width="24" height="24" viewBox="0 0 24 24" fill="none"><circle cx="12" cy="11" r="8" stroke="#2b9cf0" strokeWidth="3" /><path d="M4 20l5-3" stroke="#2b9cf0" strokeWidth="3" /><circle cx="19" cy="19" r="3" fill="#f0b020" /></svg></TaskCell>
        <TaskCell $on><Rings a="#707070" b="#2aa050" c="#707070" s={24} /></TaskCell>
        <Tray>
          <TrayCell><svg width="13" height="9" viewBox="0 0 13 9" fill="none" stroke="#222" strokeWidth="1.3"><path d="M1 8l5.500-6.500L12 8" /></svg></TrayCell>
          <TrayCell><svg width="18" height="16" viewBox="0 0 18 16"><ellipse cx="7" cy="7" rx="7" ry="6" fill="#2dc100" /><ellipse cx="13" cy="11" rx="5" ry="4.200" fill="#c8ccd0" /></svg></TrayCell>
          <TrayCell><Rings a="#e85030" b="#2080e0" c="#2080e0" s={18} /></TrayCell>
          <TrayCell><svg width="18" height="18" viewBox="0 0 18 18"><rect width="18" height="18" rx="3" fill="#e0202c" /><path d="M5 5h4v4H5zM11 4v8l-3 2" fill="none" stroke="#fff" strokeWidth="1.6" /></svg></TrayCell>
          <TrayCell><svg width="18" height="18" viewBox="0 0 18 18" fill="none"><circle cx="9" cy="8" r="6" stroke="#2b9cf0" strokeWidth="2.200" /><circle cx="14" cy="14" r="2.500" fill="#f0b020" /></svg></TrayCell>
          <TrayCell><svg width="16" height="20" viewBox="0 0 16 20"><ellipse cx="8" cy="9" rx="6" ry="8" fill="#111" /><ellipse cx="8" cy="12" rx="4" ry="5" fill="#fff" /><path d="M2 17l5 1.500-2 1.500zM14 17l-5 1.500 2 1.500z" fill="#f0a020" /><path d="M4 9h8" stroke="#e02020" strokeWidth="1.500" /></svg></TrayCell>
          <TrayCell><svg width="16" height="16" viewBox="0 0 16 16" fill="none" stroke="#333" strokeWidth="1.200"><path d="M1 15a14 14 0 0 1 14-14M4 15a11 11 0 0 1 11-11M7 15a8 8 0 0 1 8-8M10 15a5 5 0 0 1 5-5" /></svg></TrayCell>
          <TrayCell><svg width="16" height="16" viewBox="0 0 16 16" fill="none" stroke="#333" strokeWidth="1.200"><path d="M1 6v4h3l4 4V2L4 6zM10 5a4 4 0 0 1 0 6M12 3a7 7 0 0 1 0 10" /></svg></TrayCell>
          <TrayCell>中</TrayCell>
          <TrayLogo><svg width="17" height="19" viewBox="0 0 17 19" fill="none" stroke="#f0601a" strokeWidth="3.600"><path d="M15 4C9 0 2 2 3 6s11 3 11 8-8 5-12 2" /></svg></TrayLogo>
          <Clock>13:44<br />2021/3/25</Clock>
          <NotifyCell><svg width="17" height="16" viewBox="0 0 17 16" fill="none" stroke="#222" strokeWidth="1.200"><path d="M1 1h15v11H10l-1.500 3L7 12H1z" /></svg></NotifyCell>
        </Tray>
      </Taskbar>

      <UploadTab>
        <UploadIcon><svg width="20" height="14" viewBox="0 0 20 14" fill="none" stroke="#fff" strokeWidth="2.400"><circle cx="10" cy="4" r="3" /><circle cx="5" cy="10" r="3" /><circle cx="15" cy="10" r="3" /></svg></UploadIcon>
        <UploadText>拖拽上传</UploadText>
      </UploadTab>

      <ContextMenu>
        <MenuRow><MenuIcon><ChartIcon mark={<path d="M13 0l4 4M17 0l-4 4" stroke="#e00000" strokeWidth="1.400" />} /></MenuIcon>关闭(L)</MenuRow>
        <MenuRow>重命名(T)</MenuRow>
        <MenuRow $off>删除(W)</MenuRow>
        <MenuRow><MenuIcon><svg width="18" height="18" viewBox="0 0 18 18"><rect x="0.500" y="6.500" width="7" height="6" fill="#fff" stroke="#222" /><rect x="9.500" y="6.500" width="7" height="6" fill="#fff" stroke="#222" /><path d="M3 8v3M13 8v3" stroke="#d00000" /><path d="M5 8v3M15 8v3" stroke="#000080" /></svg></MenuIcon>复制(U)</MenuRow>
        <MenuRow>隐藏可用图(H)</MenuRow>
        <MenuRow>查看图(V)<MenuCaret /></MenuRow>
        <MenuSep />
        <MenuRow><MenuIcon><ChartIcon mark={<path d="M13 3l2-2 2 1" fill="none" stroke="#222" />} /></MenuIcon>打开新图(N)</MenuRow>
        <MenuRow>叠加图(O)...</MenuRow>
        <MenuSep />
        <MenuRow><MenuIcon><svg width="18" height="18" viewBox="0 0 18 18"><rect x="1" y="2" width="15" height="13" fill="#000" stroke="#444" /><path d="M2 9h4l2-4 2 7 2-3h3" fill="none" stroke="#00e040" /></svg></MenuIcon>添加度量(S)...</MenuRow>
        <MenuSep />
        <MenuRow><MenuIcon><ChartIcon mark={<circle cx="13.500" cy="14.500" r="3" fill="#2040b0" />} /></MenuIcon>导出到 HTML(X)...</MenuRow>
        <MenuRow><MenuIcon><ChartIcon mark={<path d="M14 1v4M16.500 1v4" stroke="#222" strokeWidth="1.400" />} /></MenuIcon>冻结(F)</MenuRow>
        <MenuRow><MenuIcon><svg width="18" height="18" viewBox="0 0 18 18"><rect x="1" y="1" width="9" height="11" fill="#fff" stroke="#222" /><rect x="2" y="2" width="4" height="9" fill="#e00000" /><rect x="8" y="8" width="9" height="9" fill="#fff" stroke="#222" /><path d="M10 10.500h5M10 12.500h5M10 14.500h5" stroke="#222" strokeDasharray="1 1" /></svg></MenuIcon>配置(R)...</MenuRow>
        <MenuSep />
        <MenuRow $off><MenuIcon><svg width="16" height="18" viewBox="0 0 16 18" fill="none" stroke="#a8a8a8" strokeWidth="1.400"><path d="M2 6v4h4M2 10c3-4 8-4 11-1" /></svg></MenuIcon>撤消视图更改(Y)</MenuRow>
        <MenuRow $off><MenuIcon><svg width="16" height="18" viewBox="0 0 16 18" fill="none" stroke="#a8a8a8" strokeWidth="1.400"><path d="M14 6v4h-4M14 10C11 6 6 6 3 9" /></svg></MenuIcon>重复视图更改(Z)</MenuRow>
      </ContextMenu>

      <ArrowLayer width="1908" height="1038" viewBox="0 0 1908 1038">
        <polygon points="1418,767 1422,738 1431,744 1519,661 1441,752 1447,757" fill="#f03c3c" />
      </ArrowLayer>
      <RedFrame />
      <Watermark>https://blog.csdn.net/wang32896996</Watermark>
      <SogouBar>
        <SogouCell>中</SogouCell>
        <SogouCell>°,</SogouCell>
        <SogouCell><svg width="17" height="17" viewBox="0 0 17 17" fill="none" stroke="#1b7fd8" strokeWidth="1.600"><circle cx="8.500" cy="8.500" r="7" /><path d="M5 10c2 2 5 2 7 0M6 5.500v1.500M11 5.500v1.500" /></svg></SogouCell>
        <SogouCell><svg width="14" height="18" viewBox="0 0 14 18" fill="#1b7fd8"><rect x="4" y="0" width="6" height="11" rx="3" /><path d="M1 8a6 6 0 0 0 12 0M7 14v3M3 17h8" fill="none" stroke="#1b7fd8" strokeWidth="1.600" /></svg></SogouCell>
        <SogouCell><svg width="17" height="13" viewBox="0 0 17 13"><rect width="17" height="13" rx="2" fill="#1b7fd8" /><path d="M3 4h11M3 6.500h11M5 9.500h7" stroke="#fff" strokeDasharray="1.500 1" /></svg></SogouCell>
        <SogouCell><svg width="16" height="17" viewBox="0 0 16 17" fill="#1b7fd8"><circle cx="6" cy="4" r="3.500" /><path d="M0 16c0-5 2-7 6-7s5 2 5 7z" /><rect x="9" y="10" width="6" height="6" fill="#fff" stroke="#1b7fd8" /></svg></SogouCell>
        <SogouCell><svg width="16" height="15" viewBox="0 0 16 15" fill="#1b7fd8"><path d="M4 0h2.500L8 2l1.500-2H12l4 4-2 3-2-1v9H4V6L2 7 0 4z" /></svg></SogouCell>
        <SogouCell><svg width="14" height="14" viewBox="0 0 14 14" fill="#1b7fd8"><rect width="6" height="6" /><rect x="8" width="6" height="6" /><rect y="8" width="6" height="6" /><rect x="8" y="8" width="6" height="6" /></svg></SogouCell>
      </SogouBar>
      <SogouLogo width="30" height="28" viewBox="0 0 30 28">
        <path d="M2 5l22-5 5 23-23 5z" fill="#f0601a" />
        <path d="M21 7c-7-2-13 0-12 3s11 2 11 6-8 5-13 3" fill="none" stroke="#fff" strokeWidth="3.400" />
      </SogouLogo>
    </Page>
  );
}
